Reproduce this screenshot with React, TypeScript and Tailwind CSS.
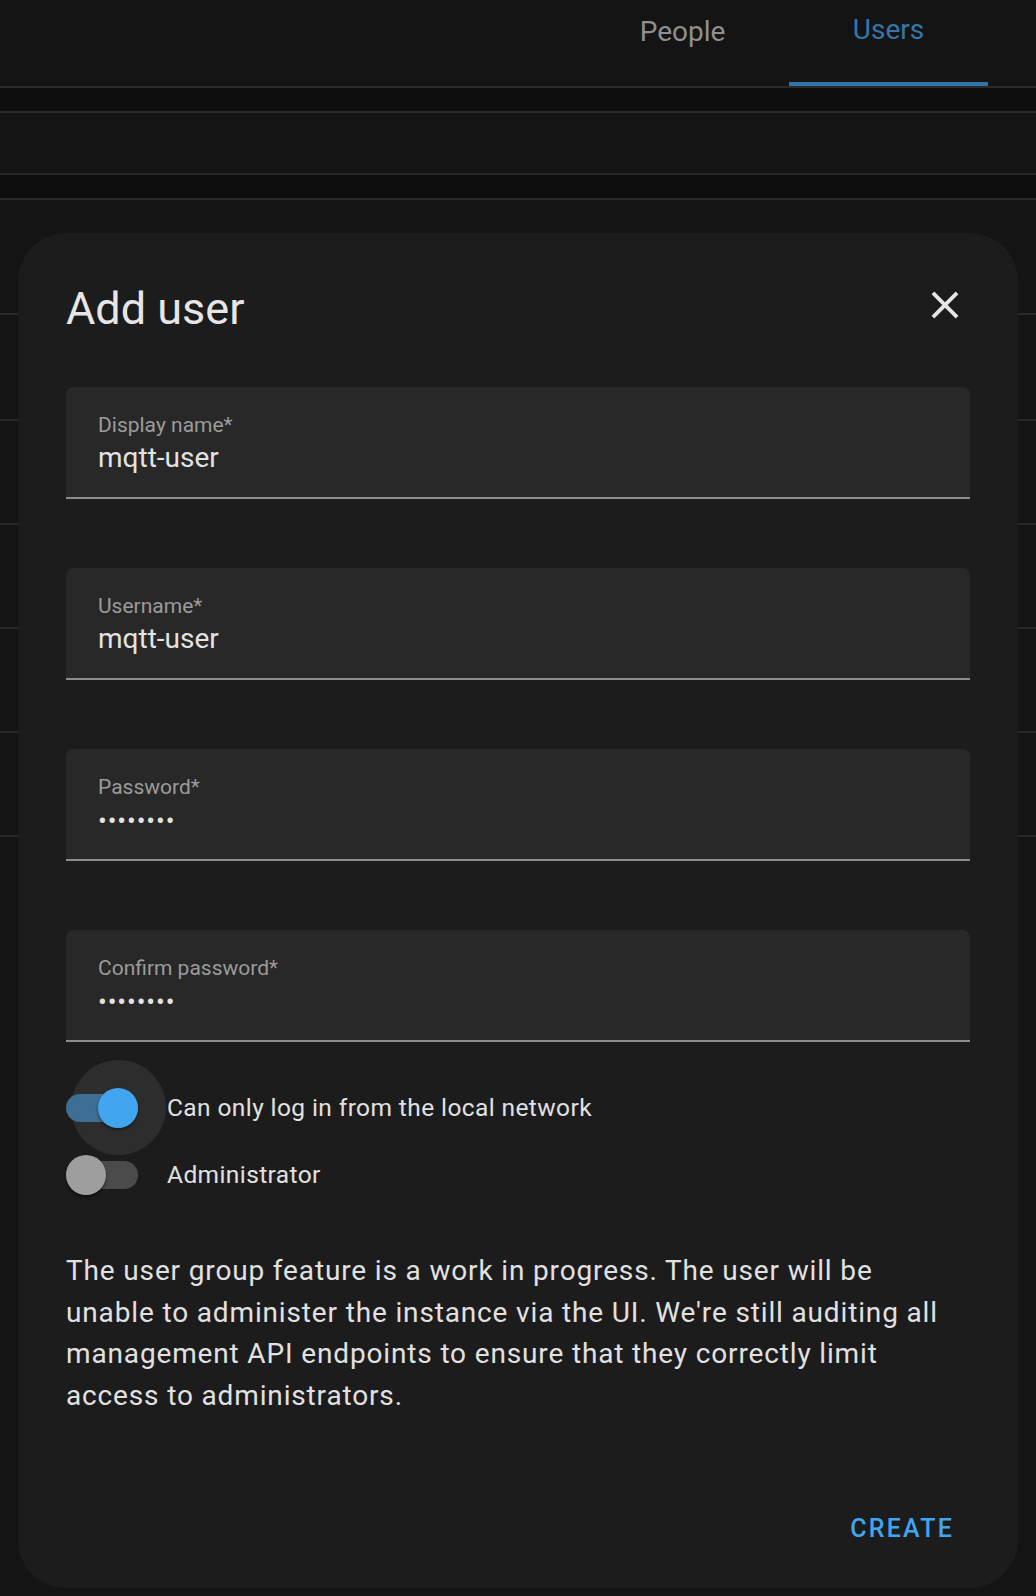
const font = { fontFamily: "Roboto, 'Liberation Sans', sans-serif" };

type Field = { label: string; value: string; secret?: boolean };

const fields: Field[] = [
  { label: "Display name*", value: "mqtt-user" },
  { label: "Username*", value: "mqtt-user" },
  { label: "Password*", value: "••••••••", secret: true },
  { label: "Confirm password*", value: "••••••••", secret: true },
];

function CloseIcon() {
  return (
    <svg viewBox="0 0 24 24" className="mt-[-1px] mr-[2px] size-[46px] shrink-0" fill="#e6e6e6">
      <path d="M19,6.41L17.59,5L12,10.59L6.41,5L5,6.41L10.59,12L5,17.59L6.41,19L12,13.41L17.59,19L19,17.59L13.41,12L19,6.41Z" />
    </svg>
  );
}

function TextField({ field }: { field: Field }) {
  return (
    <div className="h-[112px] rounded-t-[7px] border-b-2 border-[#8c8c8c] bg-[#282828] px-[32px] pt-[26px]">
      <p className="text-[21px] leading-[24px] text-[#9b9b9b]">{field.label}</p>
      {field.secret ? (
        <p className="mt-[5px] text-[26px] leading-[34px] tracking-[0.9px] text-[#e3e3e3]">
          {field.value}
        </p>
      ) : (
        <p className="mt-[4px] text-[28px] leading-[34px] text-[#e3e3e3]">{field.value}</p>
      )}
    </div>
  );
}

function Switch({ on }: { on: boolean }) {
  return (
    <div className="relative h-[40px] w-[72px] shrink-0">
      {on && (
        <span className="absolute top-[-27.5px] left-[4.5px] size-[95px] rounded-full bg-[#2d2d2d]" />
      )}
      <span
        className={
          on
            ? "absolute top-[6px] left-0 h-[28px] w-[72px] rounded-full bg-[#3d6e95]"
            : "absolute top-[6px] left-0 h-[28px] w-[72px] rounded-full bg-[#4b4b4b]"
        }
      />
      <span
        className={
          on
            ? "absolute top-0 left-[32px] size-[40px] rounded-full bg-[#42a5f0] shadow-[0_2px_3px_rgba(0,0,0,0.4)]"
            : "absolute top-0 left-0 size-[40px] rounded-full bg-[#9e9e9e] shadow-[0_2px_3px_rgba(0,0,0,0.5)]"
        }
      />
    </div>
  );
}

export default function App() {
  return (
    <div className="relative h-[1596px] w-[1036px] overflow-hidden bg-[#141414]" style={font}>
      {/* page behind the dialog */}
      <div className="flex h-[88px] justify-end border-b-2 border-[#2a2a2a] pr-[48px]">
        <div className="flex w-[213px] justify-center pt-[15px]">
          <span className="text-[28px] leading-[34px] text-[#8f8f8f]">People</span>
        </div>
        <div className="flex w-[199px] flex-col items-center pt-[13px]">
          <span className="text-[28px] leading-[34px] text-[#3577ab]">Users</span>
          <span className="mt-auto h-[4px] w-full bg-[#3274a6]" />
        </div>
      </div>
      <div className="h-[25px] border-b-2 border-[#2a2a2a] bg-[#0e0e0e]" />
      <div className="h-[62px] border-b-2 border-[#2a2a2a]" />
      <div className="h-[25px] border-b-2 border-[#2a2a2a] bg-[#0e0e0e]" />
      <div className="h-[115px] border-b-2 border-[#2a2a2a]" />
      <div className="h-[106px] border-b-2 border-[#2a2a2a]" />
      <div className="h-[104px] border-b-2 border-[#2a2a2a]" />
      <div className="h-[104px] border-b-2 border-[#2a2a2a]" />
      <div className="h-[104px] border-b-2 border-[#2a2a2a]" />
      <div className="h-[104px] border-b-2 border-[#2a2a2a]" />

      {/* Add user dialog */}
      <div className="absolute top-[233px] left-[18px] flex h-[1355px] w-[1000px] flex-col rounded-[48px] bg-[#1c1c1c] px-[48px] pt-[50px]">
        <div className="flex items-start justify-between">
          <h2 className="text-[45px] leading-[52px] text-[#e6e6e6]">Add user</h2>
          <CloseIcon />
        </div>

        <div className="mt-[52px] flex flex-col gap-[69px]">
          {fields.map((field) => (
            <TextField key={field.label} field={field} />
          ))}
        </div>

        <div className="mt-[32px] flex flex-col">
          <div className="flex h-[67px] items-center gap-[29px]">
            <Switch on />
            <span className="text-[24.5px] leading-[30px] tracking-[0.4px] text-[#e1e1e1]">
              Can only log in from the local network
            </span>
          </div>
          <div className="flex h-[67px] items-center gap-[29px]">
            <Switch on={false} />
            <span className="text-[24.5px] leading-[30px] tracking-[0.4px] text-[#e1e1e1]">
              Administrator
            </span>
          </div>
        </div>

        <p className="mt-[42px] mr-[24px] text-[28px] leading-[41.7px] tracking-[0.85px] text-[#e1e1e1]">
          The user group feature is a work in progress. The user will be unable to administer
          the instance via the UI. We're still auditing all management API endpoints to ensure
          that they correctly limit access to administrators.
        </p>

        <div className="mt-[97px] flex justify-end">
          <button className="mr-[16px] text-[25px] leading-[30px] font-medium tracking-[2.2px] text-[#42a5f0]">
            CREATE
          </button>
        </div>
      </div>
    </div>
  );
}
